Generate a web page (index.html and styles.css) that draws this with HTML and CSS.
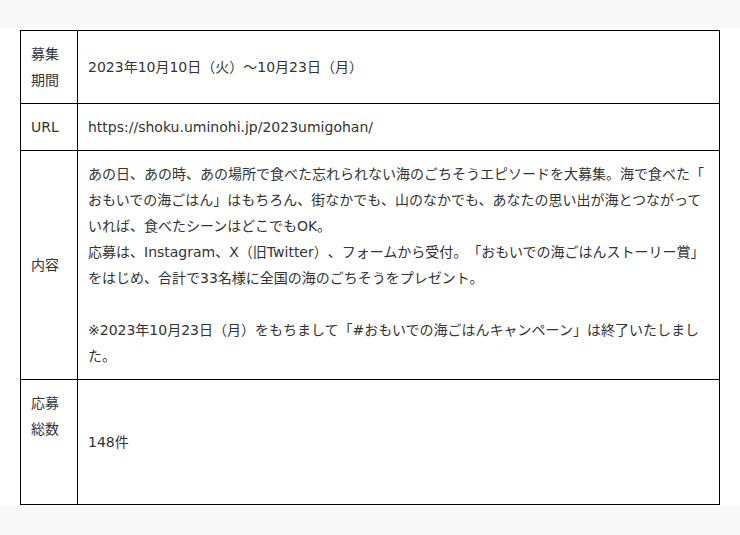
FILE: index.html
```html
<!DOCTYPE html>
<html lang="ja">
<head>
<meta charset="utf-8">
<title>おもいでの海ごはん</title>
<link rel="stylesheet" href="styles.css">
</head>
<body>
<div class="top-band"></div>
<section class="panel">
  <table class="info">
    <tr>
      <th class="label">募集期間</th>
      <td class="value">2023年10月10日（火）〜10月23日（月）</td>
    </tr>
    <tr>
      <th class="label">URL</th>
      <td class="value">https://shoku.uminohi.jp/2023umigohan/</td>
    </tr>
    <tr>
      <th class="label">内容</th>
      <td class="value">あの日、あの時、あの場所で食べた忘れられない海のごちそうエピソードを大募集。海で食べた「おもいでの海ごはん」はもちろん、街なかでも、山のなかでも、あなたの思い出が海とつながっていれば、食べたシーンはどこでもOK。<br>応募は、Instagram、X（旧Twitter）、フォームから受付。「おもいでの海ごはんストーリー賞」をはじめ、合計で33名様に全国の海のごちそうをプレゼント。<br><br>※2023年10月23日（月）をもちまして「#おもいでの海ごはんキャンペーン」は終了いたしました。</td>
    </tr>
    <tr>
      <th class="label">応募総数<br><br><br></th>
      <td class="value">148件</td>
    </tr>
  </table>
</section>
</body>
</html>
```
FILE: styles.css
```css
html, body {
  margin: 0;
  padding: 0;
  background: #f8f8f8;
}
body {
  font-family: "DejaVu Sans", "Noto Sans CJK JP", sans-serif;
  font-size: 14px;
  line-height: 26px;
  color: #333;
  text-spacing-trim: space-all;
}
.top-band {
  height: 28px;
}
.panel {
  background: #fff;
  padding: 2px 0 1px 20px;
}
.info {
  width: 700px;
  border-collapse: collapse;
  table-layout: fixed;
}
.info th,
.info td {
  border: 1px solid #000;
  padding: 10px;
  vertical-align: middle;
  text-align: left;
  font-weight: normal;
}
.info .label {
  width: 36px;
}
.info .value {
  word-break: break-all;
  line-break: anywhere;
}
```
